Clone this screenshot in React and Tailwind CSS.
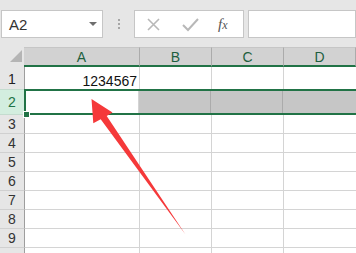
import React from 'react';

const GREEN = 'border-[#217346]';

const BodyRow = ({ n }) => (
    <div className="flex h-[19px]">
        <div className="w-[25px] shrink-0 bg-[#e6e6e6] border-r border-b border-r-[#9e9e9e] border-b-[#d0d0d0] flex items-center justify-center text-[14px] text-[#333] leading-none">
            {n}
        </div>
        <div className="w-[115px] shrink-0 bg-white border-r border-b border-[#d4d4d4]" />
        <div className="w-[72px] shrink-0 bg-white border-r border-b border-[#d4d4d4]" />
        <div className="w-[72px] shrink-0 bg-white border-r border-b border-[#d4d4d4]" />
        <div className="flex-1 bg-white border-b border-[#d4d4d4]" />
    </div>
);

const Arrow = () => (
    <svg className="absolute left-0 top-0 pointer-events-none" width="356" height="253" viewBox="0 0 356 253">
        <polygon
            points="91.5,99 112.5,112.5 106.7,116 185.5,234.5 100.7,119.3 93.3,123.3"
            fill="#f5393a"
        />
    </svg>
);

const App = () => {
    return (
        <div className="relative w-[356px] h-[253px] overflow-hidden bg-white font-['Liberation_Sans',Arial,sans-serif] select-none">
            {/* formula bar */}
            <div className="h-[47px] bg-[#e6e6e6] flex items-start pt-[10px] pl-[1px]">
                <div className="w-[102px] h-[28px] shrink-0 bg-white border border-[#c6c6c6] flex items-center justify-between pl-[7px] pr-[5px]">
                    <span className="text-[15px] text-[#333] leading-none">A2</span>
                    <span className="w-0 h-0 border-l-[4px] border-r-[4px] border-t-[4px] border-l-transparent border-r-transparent border-t-[#6e6e6e]" />
                </div>
                <div className="w-[31px] h-[28px] shrink-0 flex flex-col items-center justify-center gap-[2px]">
                    <span className="w-[2px] h-[2px] bg-[#a6a6a6]" />
                    <span className="w-[2px] h-[2px] bg-[#a6a6a6]" />
                    <span className="w-[2px] h-[2px] bg-[#a6a6a6]" />
                </div>
                <div className="w-[110px] h-[28px] shrink-0 bg-white border border-[#c6c6c6] flex items-center">
                    <svg width="38" height="26" viewBox="0 0 38 26" className="shrink-0">
                        <path d="M13 8 L24 19 M24 8 L13 19" stroke="#b8b8b8" strokeWidth="1.6" fill="none" />
                    </svg>
                    <svg width="36" height="26" viewBox="0 0 36 26" className="shrink-0">
                        <path d="M10 14 L15 19 L25 8" stroke="#b8b8b8" strokeWidth="2" fill="none" />
                    </svg>
                    <span className="ml-[9px] text-[15px] italic text-[#555] font-['Liberation_Serif',serif] leading-none">
                        f<span className="text-[12px]">x</span>
                    </span>
                </div>
                <div className="ml-[4px] flex-1 h-[28px] bg-white border border-[#c6c6c6]" />
            </div>

            {/* column headers */}
            <div className="flex h-[20px]">
                <div className="w-[24px] shrink-0 bg-[#e6e6e6] relative">
                    <span className="absolute left-[10px] top-[3px] w-0 h-0 border-b-[12px] border-l-[12px] border-b-[#b5b5b5] border-l-transparent" />
                </div>
                {[
                    ['A', 'w-[116px]'],
                    ['B', 'w-[72px]'],
                    ['C', 'w-[72px]'],
                    ['D', 'flex-1'],
                ].map(([k, w]) => (
                    <div
                        key={k}
                        className={`${w} shrink-0 bg-[#d2d2d2] border-t border-t-[#c6c6c6] border-b-2 ${GREEN} border-r border-r-[#ababab] flex items-center justify-center text-[14px] text-[#1e5f3f] leading-none`}
                    >
                        {k}
                    </div>
                ))}
            </div>

            {/* row 1 */}
            <div className="flex h-[22px]">
                <div className="w-[25px] shrink-0 bg-[#e6e6e6] border-r border-r-[#9e9e9e] flex items-center justify-center text-[14px] text-[#222] leading-none pt-[2px]">
                    1
                </div>
                <div className="w-[115px] shrink-0 bg-white border-r border-[#d4d4d4] flex items-end justify-end pr-[2px] pb-[1px] text-[14px] text-[#111] leading-none">
                    1234567
                </div>
                <div className="w-[72px] shrink-0 bg-white border-r border-[#d4d4d4]" />
                <div className="w-[72px] shrink-0 bg-white border-r border-[#d4d4d4]" />
                <div className="flex-1 bg-white" />
            </div>

            {/* row 2 (selected) */}
            <div className="flex h-[26px]">
                <div className="w-[24px] shrink-0 bg-[#d3eedf] border-y border-[#c4dccf] flex items-center justify-center text-[14px] text-[#217346] leading-none">
                    2
                </div>
                <div className={`flex-1 flex border-2 border-r-0 ${GREEN}`}>
                    <div className="w-[113px] shrink-0 bg-white border-r border-[#d4d4d4]" />
                    <div className="w-[72px] shrink-0 bg-[#c6c6c6] border-r border-[#ababab]" />
                    <div className="w-[72px] shrink-0 bg-[#c6c6c6] border-r border-[#ababab]" />
                    <div className="flex-1 bg-[#c6c6c6]" />
                </div>
            </div>

            {[3, 4, 5, 6, 7, 8, 9, ''].map((n, i) => (
                <BodyRow key={i} n={n} />
            ))}

            {/* fill handle */}
            <span className="absolute left-[23px] top-[111px] w-[7px] h-[7px] bg-[#217346] border border-white" />

            <Arrow />
        </div>
    );
};

export default App;
